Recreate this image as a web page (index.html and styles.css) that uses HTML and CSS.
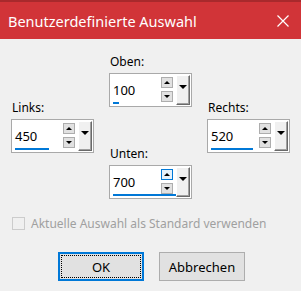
FILE: index.html
```html
<!DOCTYPE html>
<html>
<head>
<meta charset="utf-8">
<link rel="stylesheet" href="styles.css">
</head>
<body>
<div class="dialog">
  <div class="titlebar">
    <span class="title">Benutzerdefinierte Auswahl</span>
    <svg class="close" width="12" height="12" viewBox="0 0 12 12"><path d="M0.5 0.5 L11.5 11.5 M11.5 0.5 L0.5 11.5" stroke="#fff" stroke-width="1.2" fill="none"/></svg>
  </div>
  <div class="content">
    <div class="fields">
      <div class="col side">
        <div class="group">
          <div class="label">Links:</div>
          <div class="spin">
            <div class="value"><span>450</span><div class="bar" style="width:34px"></div></div>
            <div class="arrows"><div class="btn up"></div><div class="btn down"></div></div>
            <div class="drop"><span class="tri"></span></div>
          </div>
        </div>
      </div>
      <div class="col center">
        <div class="group">
          <div class="label">Oben:</div>
          <div class="spin">
            <div class="value"><span>100</span><div class="bar" style="width:6px"></div></div>
            <div class="arrows"><div class="btn up"></div><div class="btn down"></div></div>
            <div class="drop"><span class="tri"></span></div>
          </div>
        </div>
        <div class="group">
          <div class="label">Unten:</div>
          <div class="spin">
            <div class="value"><span>700</span><div class="bar" style="width:63px"></div></div>
            <div class="arrows"><div class="btn up hover"></div><div class="btn down"></div></div>
            <div class="drop"><span class="tri"></span></div>
          </div>
        </div>
      </div>
      <div class="col side">
        <div class="group">
          <div class="label">Rechts:</div>
          <div class="spin">
            <div class="value"><span>520</span><div class="bar" style="width:42px"></div></div>
            <div class="arrows"><div class="btn up"></div><div class="btn down"></div></div>
            <div class="drop"><span class="tri"></span></div>
          </div>
        </div>
      </div>
    </div>
    <label class="check"><span class="box"></span><span class="ctext">Aktuelle Auswahl als Standard verwenden</span></label>
    <div class="buttons">
      <div class="button ok"><span class="focus">OK</span></div>
      <div class="button">Abbrechen</div>
    </div>
  </div>
</div>
</body>
</html>
```
FILE: styles.css
```css
html, body {
  margin: 0;
  padding: 0;
  background: #f0f0f0;
}
body {
  width: 301px;
  height: 291px;
  overflow: hidden;
  font-family: "Noto Sans", "Open Sans", sans-serif;
}
.dialog {
  width: 301px;
  height: 291px;
  background: #f0f0f0;
}
.titlebar {
  height: 39px;
  box-sizing: border-box;
  background: #d13438;
  border-top: 2px solid #a8292c;
  display: flex;
  align-items: center;
  justify-content: space-between;
  padding: 0 12px 0 8px;
}
.title {
  color: #fff;
  font-size: 14.5px;
  line-height: 20px;
}
.close {
  display: block;
}
.content {
  padding: 15px 0 0 11px;
}
.fields {
  display: flex;
  gap: 15px;
}
.col {
  display: flex;
  flex-direction: column;
  gap: 39px;
}
.side {
  padding-top: 46px;
}
.label {
  font-size: 12px;
  line-height: 16px;
  color: #000;
  padding-left: 1px;
  margin-bottom: 3px;
}
.spin {
  width: 83px;
  height: 34px;
  box-sizing: border-box;
  background: #fff;
  border: 1px solid #a9a9a9;
  display: flex;
  padding: 3px 1px 1px 3px;
}
.value {
  flex: 1;
  min-width: 0;
  display: flex;
  flex-direction: column;
  justify-content: space-between;
}
.value span {
  font-size: 13px;
  line-height: 16px;
  padding-top: 5px;
  color: #000;
}
.bar {
  height: 2px;
  flex: none;
  background: #0078d7;
  margin-bottom: 1px;
}
.arrows {
  flex: none;
  display: flex;
  flex-direction: column;
  gap: 3px;
  margin-right: 3px;
}
.btn {
  width: 12px;
  height: 11px;
  box-sizing: border-box;
  background: #e1e1e1;
  border: 1px solid #adadad;
  position: relative;
}
.btn.hover {
  background: #e5f1fb;
  border-color: #0078d7;
}
.btn::after {
  content: "";
  position: absolute;
  left: 2px;
  top: 3px;
  border-left: 3px solid transparent;
  border-right: 3px solid transparent;
}
.up::after {
  border-bottom: 3px solid #000;
}
.down::after {
  border-top: 3px solid #000;
}
.drop {
  flex: none;
  width: 14px;
  margin-top: -2px;
  box-sizing: border-box;
  background: #f0f0f0;
  border-left: 1px solid #fff;
  border-top: 1px solid #fff;
  border-right: 1px solid #696969;
  border-bottom: 1px solid #696969;
  box-shadow: inset -1px -1px 0 #a0a0a0;
  display: flex;
  justify-content: center;
  padding-top: 9px;
}
.tri {
  width: 0;
  height: 0;
  border-left: 4px solid transparent;
  border-right: 4px solid transparent;
  border-top: 4px solid #000;
}
.check {
  display: flex;
  align-items: center;
  margin-top: 16px;
  margin-left: 1px;
  gap: 6px;
}
.box {
  width: 13px;
  height: 13px;
  box-sizing: border-box;
  border: 1px solid #cccccc;
  background: #f0f0f0;
}
.ctext {
  font-size: 12px;
  color: #a0a0a0;
}
.buttons {
  display: flex;
  gap: 15px;
  margin-top: 20px;
  margin-left: 47px;
}
.button {
  width: 86px;
  height: 29px;
  box-sizing: border-box;
  background: #e1e1e1;
  border: 1px solid #adadad;
  font-size: 13px;
  display: flex;
  align-items: center;
  justify-content: center;
  color: #000;
}
.button.ok {
  border: 2px solid #0078d7;
  padding: 1px;
}
.focus {
  flex: 1;
  align-self: stretch;
  display: flex;
  align-items: center;
  justify-content: center;
  border: 1px dotted #000;
}
```
